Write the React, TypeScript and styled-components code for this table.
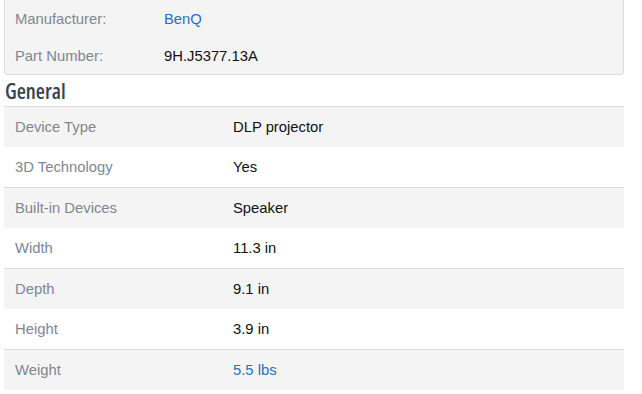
import React from "react";
import styled, { createGlobalStyle } from "styled-components";

const Global = createGlobalStyle`
  html, body { margin: 0; padding: 0; background: #fff; }
  body { font-family: "Liberation Sans", Arial, sans-serif; -webkit-font-smoothing: antialiased; }
`;

const Page = styled.div`
  width: 620px;
  margin-left: 4px;
`;

const InfoBox = styled.div`
  background: #f4f4f4;
  border: 1px solid #dcdcdc;
  border-top: none;
  border-radius: 0 0 4px 4px;
  padding: 0 10px;
`;

const InfoRow = styled.div`
  display: grid;
  grid-template-columns: 149px 1fr;
  height: 37px;
  align-items: center;
  font-size: 14.8px;
`;

const InfoLabel = styled.span`
  color: #7d8793;
`;

const Value = styled.span<{ $link?: boolean }>`
  color: ${(p) => (p.$link ? "#2b6dc2" : "#111")};
`;

const Heading = styled.h2`
  margin: 0;
  height: 31px;
  display: flex;
  align-items: center;
  padding-left: 1px;
  font-family: "Open Sans", "DejaVu Sans Condensed", sans-serif;
  font-stretch: 75%;
  font-weight: 600;
  font-size: 21px;
  color: #38434f;
`;

const Table = styled.div`
  display: flex;
  flex-direction: column;
`;

const SpecRow = styled.div<{ $striped: boolean }>`
  display: grid;
  grid-template-columns: 218px 1fr;
  align-items: center;
  height: 40px;
  padding-left: 11px;
  font-size: 14.8px;
  background: ${(p) => (p.$striped ? "#f4f4f4" : "#fff")};
  border-top: ${(p) => (p.$striped ? "1px solid #dcdcdc" : "none")};
`;

const SpecLabel = styled.span`
  color: #7d8793;
`;

const specs: { label: string; value: string; link?: boolean }[] = [
  { label: "Device Type", value: "DLP projector" },
  { label: "3D Technology", value: "Yes" },
  { label: "Built-in Devices", value: "Speaker" },
  { label: "Width", value: "11.3 in" },
  { label: "Depth", value: "9.1 in" },
  { label: "Height", value: "3.9 in" },
  { label: "Weight", value: "5.5 lbs", link: true },
];

export default function App() {
  return (
    <>
      <Global />
      <Page>
        <InfoBox>
          <InfoRow>
            <InfoLabel>Manufacturer:</InfoLabel>
            <Value $link>BenQ</Value>
          </InfoRow>
          <InfoRow>
            <InfoLabel>Part Number:</InfoLabel>
            <Value>9H.J5377.13A</Value>
          </InfoRow>
        </InfoBox>
        <Heading>General</Heading>
        <Table>
          {specs.map((s, i) => (
            <SpecRow key={s.label} $striped={i % 2 === 0}>
              <SpecLabel>{s.label}</SpecLabel>
              <Value $link={s.link}>{s.value}</Value>
            </SpecRow>
          ))}
        </Table>
      </Page>
    </>
  );
}
